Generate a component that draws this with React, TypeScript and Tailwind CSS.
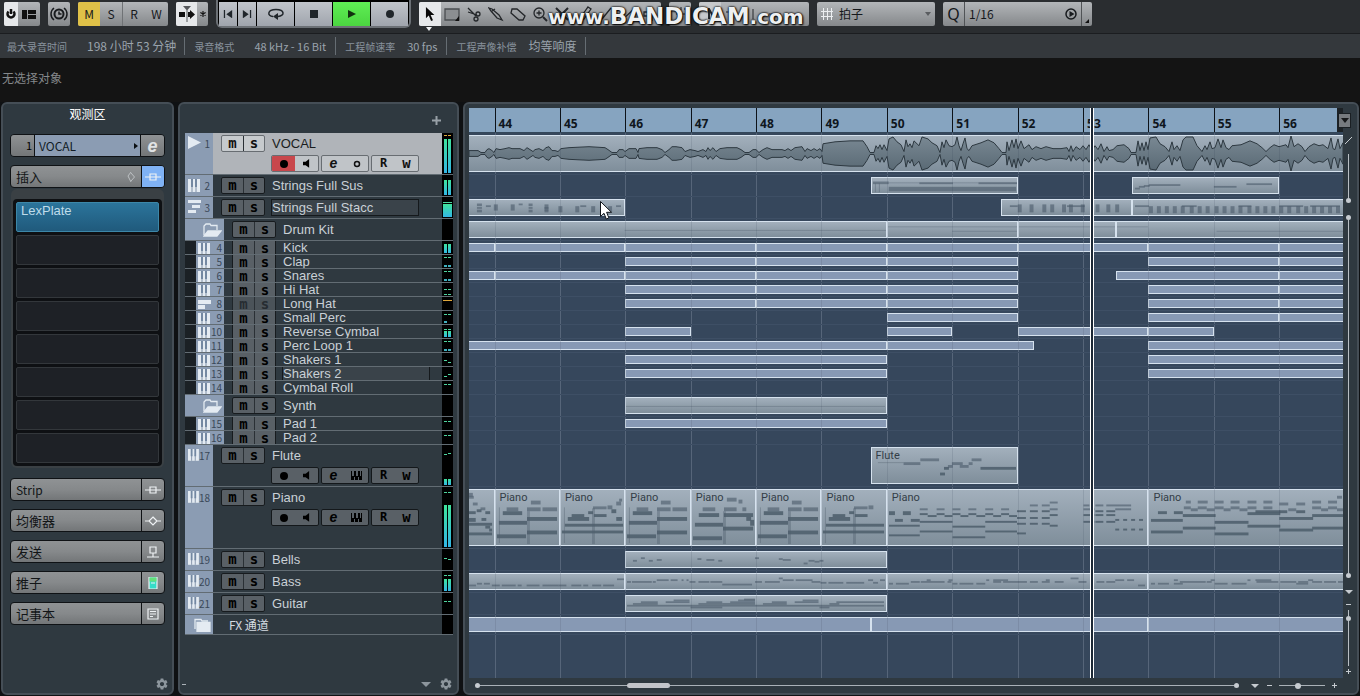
import type { ReactNode } from 'react'
import { MdSettings } from 'react-icons/md'

type Size = 'sm' | 'fx' | 'md' | 'lg' | 'xl'
type Note = [x: number, y: number, w: number, h: number]

interface Clip {
  from: number
  to: number
  label?: string
  notes?: Note[]
}

interface Track {
  name: string
  no?: number
  size: Size
  kind: 'audio' | 'midi' | 'rack' | 'folder' | 'fx'
  child?: boolean
  muted?: boolean
  selected?: boolean
  boxed?: boolean
  meter?: { l?: number; r?: number; peaks?: Note[]; hot?: boolean; wide?: boolean }
  clips?: Clip[]
}

const ROW_CLASS: Record<Size, string> = {
  sm: 'h-[14px]',
  fx: 'h-5',
  md: 'h-[22px]',
  lg: 'h-[42px]',
  xl: 'h-[62px]',
}

const ROW_PX: Record<Size, number> = { sm: 14, fx: 20, md: 22, lg: 42, xl: 62 }

// visible part of the timeline, in bars
const VIEW_START = 43.61
const VIEW_END = 56.975
const BAR_PX = 65.4
const BARS = [44, 45, 46, 47, 48, 49, 50, 51, 52, 53, 54, 55, 56]

const pct = (bar: number) => `${((bar - VIEW_START) / (VIEW_END - VIEW_START)) * 100}%`

const spans = (...edges: [number, number][]): Clip[] => edges.map(([from, to]) => ({ from, to }))

const row = (y: number, h: number, ...xs: [number, number][]): Note[] => xs.map(([x, w]) => [x, y, w, h])

const PIANO_A: Note[] = [
  [36, 11, 10, 4], [11, 18, 12, 4], [7, 22, 20, 4], [32, 18, 14, 4], [48, 18, 15, 4],
  [3, 32, 29, 4], [32, 28, 31, 4], [1, 46, 30, 4], [32, 42, 31, 4], [32, 22, 3, 34], [3, 18, 1, 37],
]

const PIANO_B: Note[] = [
  [11, 25, 13, 3], [7, 28, 22, 4], [4, 35, 60, 3], [1, 42, 63, 3], [32, 19, 3, 37], [3, 18, 1, 37],
  [33, 17, 14, 3], [34, 25, 13, 3], [28, 22, 5, 3], [48, 16, 5, 4], [52, 20, 5, 4], [57, 12, 5, 4],
  [60, 9, 3, 3], [57, 28, 6, 4],
]

const PIANO_C: Note[] = [
  [36, 8, 10, 4], [48, 10, 4, 4], [11, 18, 13, 4], [7, 24, 21, 4], [33, 18, 13, 4], [52, 18, 4, 4],
  [33, 24, 30, 4], [56, 28, 5, 4], [3, 34, 29, 4], [32, 38, 31, 4], [1, 48, 30, 4], [32, 22, 3, 34],
  [60, 31, 4, 6],
]

const PIANO_TAIL: Note[] = [
  [0, 3, 4, 4], [0, 6, 5, 3], [4, 13, 5, 3], [12, 18, 5, 3], [8, 20, 5, 3], [0, 22, 7, 3], [17, 22, 5, 3],
  [0, 29, 7, 4], [13, 29, 5, 3], [0, 34, 24, 3], [17, 37, 5, 3], [21, 40, 3, 3], [0, 44, 24, 3],
]

const PIANO_LONG: Note[] = [
  ...row(22, 4, [1, 6], [15, 8]),
  ...row(30, 3, [7, 8], [23, 9]),
  ...row(36, 2, [1, 31]),
  ...row(46, 2, [1, 31]),
  ...row(19, 2, [32, 8], [49, 8], [65, 8], [81, 8], [98, 8], [114, 8]),
  ...row(24, 2, [32, 8], [49, 8], [65, 8], [81, 8], [98, 8], [114, 8]),
  ...row(26, 2, [40, 9], [57, 8], [73, 8], [89, 9], [106, 8], [122, 8]),
  ...row(32, 2, [32, 33], [98, 32]),
  ...row(37, 2, [65, 33]),
  ...row(42, 2, [32, 33], [98, 32]),
  ...row(48, 2, [65, 33]),
  ...row(21, 2, [130, 9], [143, 8], [155, 8], [209, 8], [220, 9]),
  ...row(28, 2, [130, 9], [143, 8], [155, 8]),
  ...row(34, 2, [130, 9], [143, 8], [155, 8]),
  ...row(44, 2, [130, 9]),
  ...row(15, 2, [143, 8], [155, 8], [197, 6], [209, 8], [220, 25]),
  ...row(12, 2, [163, 8]),
  ...row(19, 2, [163, 8], [197, 11], [229, 16]),
  ...row(25, 2, [163, 8], [197, 11], [209, 8], [220, 9]),
  ...row(36, 2, [163, 8]),
  ...row(32, 2, [197, 11], [209, 8], [220, 9]),
  ...row(30, 2, [229, 4], [237, 4], [245, 4], [253, 4]),
  ...row(40, 2, [229, 4], [237, 4], [245, 4], [253, 4]),
]

const PIANO_END: Note[] = [
  ...row(11, 3, [37, 5], [49, 10], [66, 9], [82, 9], [99, 9], [115, 9], [164, 9], [180, 9]),
  ...row(13, 3, [131, 9], [148, 9]),
  ...row(6, 3, [189, 5]),
  ...row(17, 3, [35, 7], [49, 9], [66, 9], [82, 9], [99, 9], [115, 9], [164, 9], [180, 9]),
  ...row(19, 3, [42, 7], [58, 8], [75, 7], [91, 8], [140, 8], [173, 7], [189, 6]),
  ...row(21, 3, [107, 25], [131, 8], [148, 9]),
  ...row(22, 3, [9, 9], [25, 9]),
  ...row(30, 3, [2, 32]),
  ...row(25, 3, [34, 33], [164, 31]),
  ...row(32, 3, [66, 34]),
  ...row(23, 3, [99, 33]),
  ...row(28, 3, [131, 34]),
  ...row(42, 3, [2, 32]),
  ...row(38, 3, [34, 33], [164, 31]),
  ...row(44, 3, [66, 34]),
  ...row(36, 3, [99, 33]),
  ...row(40, 3, [131, 34]),
]

const BASS_HEAD: Note[] = [
  ...row(12, 2, [0, 7], [23, 8], [33, 14], [49, 4], [58, 13], [74, 16], [90, 8], [103, 10], [115, 5], [124, 9], [135, 11]),
  ...row(10, 2, [8, 5], [15, 6]),
  ...row(5, 2, [149, 7]),
]

const BASS_A: Note[] = [
  ...row(8, 2, [1, 4], [6, 20], [27, 3], [64, 6], [73, 11], [85, 12], [130, 7], [140, 15], [187, 9]),
  ...row(6, 2, [31, 12], [45, 7], [56, 2], [61, 2], [158, 11], [171, 17], [244, 5], [256, 5]),
  ...row(4, 2, [154, 4]),
  ...row(11, 2, [97, 30]),
  ...row(9, 2, [196, 6], [204, 15], [222, 18], [249, 5]),
]

const BASS_B: Note[] = [
  ...row(10, 2, [1, 4], [8, 13], [65, 5], [72, 14], [89, 9]),
  ...row(8, 2, [23, 9], [33, 24], [60, 4], [106, 8], [116, 8], [124, 16], [143, 8], [155, 8], [168, 9], [192, 8], [210, 8], [220, 9]),
  ...row(6, 2, [39, 4], [61, 4], [99, 3], [106, 15], [159, 4], [229, 9], [241, 7]),
  ...row(4, 2, [184, 8]),
  ...row(12, 2, [252, 7]),
]

const BASS_C: Note[] = [
  ...row(10, 2, [2, 4], [9, 11], [25, 9], [66, 13], [83, 15], [148, 12]),
  ...row(8, 2, [31, 26], [58, 5], [108, 22], [132, 16], [150, 10], [164, 10], [176, 12], [190, 5]),
  ...row(6, 2, [25, 4], [62, 4], [99, 3], [107, 16], [160, 5]),
]

const BELLS: Note[] = [
  ...row(9, 2, [7, 4], [23, 4], [93, 4], [184, 6], [195, 4]),
  ...row(6, 2, [15, 4], [130, 4]),
  ...row(8, 2, [31, 5], [81, 8], [158, 8]),
  ...row(7, 2, [72, 4], [154, 4]),
  ...row(10, 2, [190, 5]),
  ...row(12, 2, [179, 4]),
]

const GUITAR: Note[] = [
  ...row(10, 2, [1, 259]),
  ...row(12, 2, [65, 32], [195, 10]),
  ...row(8, 2, [7, 25], [73, 24], [97, 33], [138, 24], [205, 10]),
  ...row(6, 2, [15, 17], [40, 24], [81, 16], [105, 25], [147, 15], [170, 24], [212, 48]),
  ...row(4, 2, [48, 16], [113, 17], [178, 16]),
  ...row(3, 2, [119, 11]),
]

const STACC_A: Note[] = [
  ...row(4, 3, [8, 5], [60, 4]),
  ...row(8, 2, [8, 5], [60, 4], [76, 4]),
  ...row(11, 3, [8, 5], [60, 4], [76, 4]),
  ...row(6, 2, [17, 5], [112, 6], [148, 5]),
  ...row(4, 2, [50, 4]),
  ...row(5, 7, [25, 4], [42, 4], [76, 4]),
  ...row(7, 7, [90, 4], [107, 4], [123, 4], [140, 4]),
]

const STACC_B: Note[] = [
  ...row(6, 2, [8, 8], [66, 18]),
  ...row(5, 9, [16, 4], [28, 4], [41, 4], [49, 4], [61, 4], [68, 4], [80, 4], [95, 4], [106, 4], [115, 4]),
]

const STACC_C: Note[] = [
  ...row(6, 2, [2, 14], [49, 15], [106, 13], [147, 24], [178, 30]),
  ...row(7, 8, [16, 4], [24, 4], [32, 4], [40, 4], [48, 4], [57, 4], [65, 4], [73, 4], [82, 4], [90, 4], [98, 4], [106, 4], [115, 4], [123, 4], [131, 4], [139, 4], [147, 4], [155, 4], [164, 4], [172, 4], [180, 4], [188, 4], [196, 4], [204, 4]),
]

const SUS_A: Note[] = [[1, 4, 16, 3], [17, 10, 129, 5], [17, 5, 130, 1], [3, 6, 1, 10], [7, 6, 1, 10], [48, 5, 34, 2], [108, 5, 40, 2]]
const SUS_B: Note[] = [[2, 11, 5, 2], [6, 9, 6, 2], [11, 8, 6, 2], [16, 7, 32, 2], [82, 9, 23, 2], [115, 6, 26, 2]]

const FLUTE: Note[] = [
  [6, 15, 26, 1], [32, 15, 17, 3], [49, 11, 19, 3], [69, 26, 5, 3], [73, 20, 5, 3], [77, 18, 5, 3],
  [81, 15, 11, 3], [89, 18, 9, 3], [98, 15, 4, 3], [101, 11, 10, 3], [110, 20, 36, 3],
]

const PAIR_LOW: Note[] = [[2, 2, 3, 1], [6, 2, 3, 1], [2, 10, 3, 2], [6, 10, 3, 2]]
const HAT_CLIPS = spans([46, 48], [48, 50], [50, 52], [54, 56], [56, VIEW_END])
const SHAKER_CLIPS = spans([46, 50], [54, VIEW_END])

const TRACKS: Track[] = [
  { name: 'VOCAL', no: 1, size: 'lg', kind: 'audio', selected: true, meter: { l: 34, r: 34, peaks: [[2, 2, 3, 1], [6, 2, 3, 1]], hot: true }, clips: spans([VIEW_START, VIEW_END]) },
  { name: 'Strings Full Sus', no: 2, size: 'md', kind: 'midi', meter: { l: 15, r: 15 }, clips: [{ from: 49.75, to: 52, notes: SUS_A }, { from: 53.75, to: 56, notes: SUS_B }] },
  { name: 'Strings Full Stacc', no: 3, size: 'md', kind: 'rack', boxed: true, meter: { l: 13, r: 13, wide: true, peaks: [[1, 5, 9, 1]] }, clips: [{ from: VIEW_START, to: 46, notes: STACC_A }, { from: 51.75, to: 53.75, notes: STACC_B }, { from: 53.75, to: VIEW_END, notes: STACC_C }] },
  {
    name: 'Drum Kit', size: 'md', kind: 'folder',
    clips: [
      { from: VIEW_START, to: 50, notes: [[156, 9, 262, 1]] },
      { from: 50, to: 52, notes: [[0, 5, 131, 1], [65, 10, 66, 1]] },
      { from: 52, to: 53.5, notes: [[0, 5, 98, 1]] },
      { from: 53.5, to: VIEW_END, notes: [[0, 5, 31, 1], [100, 10, 128, 1]] },
    ],
  },
  { name: 'Kick', no: 4, size: 'sm', kind: 'midi', child: true, meter: { l: 9, r: 9 }, clips: spans([VIEW_START, 44], [44, 46], [46, 48], [48, 50], [50, 52], [52, 54], [54, 56], [56, VIEW_END]) },
  { name: 'Clap', no: 5, size: 'sm', kind: 'midi', child: true, meter: { peaks: PAIR_LOW }, clips: HAT_CLIPS },
  { name: 'Snares', no: 6, size: 'sm', kind: 'midi', child: true, meter: { peaks: PAIR_LOW }, clips: spans([VIEW_START, 44], [44, 46], [46, 48], [48, 50], [50, 52], [53.5, 56], [56, VIEW_END]) },
  { name: 'Hi Hat', no: 7, size: 'sm', kind: 'midi', child: true, meter: { peaks: [[2, 6, 3, 1], [6, 6, 3, 1], [2, 11, 3, 1], [6, 11, 3, 1]] }, clips: HAT_CLIPS },
  { name: 'Long Hat', no: 8, size: 'sm', kind: 'rack', child: true, muted: true, meter: { peaks: [[1, 3, 9, 1]], hot: true }, clips: HAT_CLIPS },
  { name: 'Small Perc', no: 9, size: 'sm', kind: 'midi', child: true, meter: { peaks: [[2, 3, 3, 1], [6, 3, 3, 1], [2, 10, 3, 2]] }, clips: spans([50, 52], [54, 56], [56, VIEW_END]) },
  { name: 'Reverse Cymbal', no: 10, size: 'sm', kind: 'midi', child: true, meter: { l: 6, r: 6, peaks: [[2, 4, 3, 1], [6, 4, 3, 1]] }, clips: spans([46, 47], [50, 51], [52, 54], [54, 55]) },
  { name: 'Perc Loop 1', no: 11, size: 'sm', kind: 'midi', child: true, meter: { peaks: PAIR_LOW }, clips: spans([VIEW_START, 50], [50, 52.25], [54, VIEW_END]) },
  { name: 'Shakers 1', no: 12, size: 'sm', kind: 'midi', child: true, meter: { peaks: [[2, 7, 3, 1], [6, 9, 3, 1]] }, clips: SHAKER_CLIPS },
  { name: 'Shakers 2', no: 13, size: 'sm', kind: 'midi', child: true, boxed: true, meter: { peaks: [[2, 9, 3, 1], [6, 7, 3, 1]] }, clips: SHAKER_CLIPS },
  { name: 'Cymbal Roll', no: 14, size: 'sm', kind: 'midi', child: true, meter: { peaks: [[2, 3, 3, 1], [6, 3, 3, 1]] } },
  { name: 'Synth', size: 'md', kind: 'folder', clips: [{ from: 46, to: 50, notes: [[0, 9, 261, 1]] }] },
  { name: 'Pad 1', no: 15, size: 'sm', kind: 'midi', child: true, meter: { peaks: [[2, 4, 3, 1], [6, 4, 3, 1]] }, clips: spans([46, 50]) },
  { name: 'Pad 2', no: 16, size: 'sm', kind: 'midi', child: true, meter: { peaks: [[2, 4, 3, 1], [6, 4, 3, 1]] } },
  { name: 'Flute', no: 17, size: 'lg', kind: 'midi', meter: { l: 6, r: 6, peaks: [[2, 9, 3, 1], [6, 8, 3, 1]] }, clips: [{ from: 49.75, to: 52, label: 'Flute', notes: FLUTE }] },
  {
    name: 'Piano', no: 18, size: 'xl', kind: 'midi', meter: { l: 42, r: 42, peaks: [[2, 5, 3, 1], [6, 5, 3, 1]] },
    clips: [
      { from: VIEW_START, to: 44, notes: PIANO_TAIL },
      { from: 44, to: 45, label: 'Piano', notes: PIANO_A },
      { from: 45, to: 46, label: 'Piano', notes: PIANO_B },
      { from: 46, to: 47, label: 'Piano', notes: PIANO_A },
      { from: 47, to: 48, label: 'Piano', notes: PIANO_C },
      { from: 48, to: 49, label: 'Piano', notes: PIANO_A },
      { from: 49, to: 50, label: 'Piano', notes: PIANO_B.slice(0, 10) },
      { from: 50, to: 54, label: 'Piano', notes: PIANO_LONG },
      { from: 54, to: VIEW_END, label: 'Piano', notes: PIANO_END },
    ],
  },
  { name: 'Bells', no: 19, size: 'md', kind: 'midi', meter: { peaks: [[2, 9, 3, 1], [6, 10, 3, 1]] }, clips: [{ from: 46, to: 50, notes: BELLS }] },
  { name: 'Bass', no: 20, size: 'md', kind: 'midi', meter: { l: 12, r: 12, peaks: [[2, 4, 3, 1], [6, 4, 3, 1]] }, clips: [{ from: VIEW_START, to: 46, notes: BASS_HEAD }, { from: 46, to: 50, notes: BASS_A }, { from: 50, to: 54, notes: BASS_B }, { from: 54, to: VIEW_END, notes: BASS_C }] },
  { name: 'Guitar', no: 21, size: 'md', kind: 'midi', meter: { peaks: [[2, 8, 3, 1], [6, 8, 3, 1]] }, clips: [{ from: 46, to: 50, notes: GUITAR }] },
  { name: 'FX 通道', size: 'fx', kind: 'fx', clips: spans([VIEW_START, 49.75], [49.75, 54], [54, VIEW_END]) },
]

// [x, amplitude] pairs of the vocal take
const WAVE: [number, number][] = [
  [0, 3], [9, 3], [12, 1], [16, 1], [18, 4], [20, 5], [23, 3], [25, 1], [27, 5], [31, 4], [36, 5], [40, 6], [43, 5], [51, 5],
  [55, 3], [58, 6], [61, 4], [64, 2], [66, 4], [70, 5], [74, 3], [77, 6], [80, 7], [83, 3], [86, 3], [89, 2], [92, 5], [100, 6],
  [120, 7], [136, 6], [139, 4], [143, 1], [148, 1], [150, 4], [154, 4], [156, 2], [160, 5], [167, 5], [169, 1], [170, 5],
  [178, 6], [188, 6], [193, 4], [196, 1], [200, 4], [203, 7], [207, 7], [213, 6], [216, 2], [221, 4], [226, 3], [229, 2],
  [234, 4], [237, 2], [239, 6], [241, 3], [244, 6], [247, 2], [251, 5], [258, 6], [268, 6], [272, 4], [276, 1], [280, 1],
  [284, 4], [287, 4], [290, 1], [294, 4], [298, 6], [303, 4], [313, 4], [316, 3], [319, 5], [322, 3], [326, 6], [333, 7],
  [336, 2], [338, 5], [342, 3], [345, 5], [348, 3], [351, 5], [353, 2], [354, 10], [366, 12], [381, 13], [394, 13], [398, 7],
  [401, 1], [405, 1], [407, 8], [409, 5], [411, 9], [413, 4], [415, 9], [418, 3], [420, 15], [424, 17], [428, 12], [432, 9],
  [435, 2], [437, 14], [439, 7], [441, 10], [443, 6], [445, 13], [448, 10], [450, 8], [453, 17], [459, 15], [463, 11],
  [468, 8], [471, 1], [473, 12], [475, 6], [477, 14], [480, 8], [483, 7], [486, 9], [488, 17], [490, 8], [492, 3], [494, 10],
  [496, 16], [498, 5], [500, 3], [503, 8], [512, 11], [519, 14], [525, 11], [530, 5], [533, 1], [537, 1], [538, 12], [540, 3],
  [543, 14], [545, 6], [547, 15], [549, 5], [552, 13], [555, 5], [560, 9], [563, 4], [567, 7], [572, 5], [577, 7], [584, 5],
  [592, 5], [598, 6], [600, 2], [602, 8], [604, 2], [607, 7], [611, 4], [614, 8], [617, 4], [620, 9], [623, 3], [626, 8],
  [629, 4], [632, 10], [635, 2], [638, 7], [640, 3], [644, 4], [648, 8], [655, 9], [660, 5], [662, 1], [667, 1], [669, 13],
  [671, 3], [673, 11], [675, 3], [677, 12], [679, 4], [681, 16], [687, 17], [691, 10], [696, 7], [700, 2], [703, 12],
  [705, 4], [708, 8], [711, 3], [714, 14], [717, 17], [724, 17], [728, 8], [733, 2], [736, 8], [738, 4], [741, 12], [743, 5],
  [746, 6], [749, 15], [752, 6], [754, 14], [757, 6], [760, 4], [763, 8], [772, 9], [781, 13], [788, 10], [793, 6], [797, 2],
  [801, 6], [805, 9], [810, 7], [817, 9], [819, 6], [822, 18], [825, 7], [829, 10], [833, 7], [836, 2], [840, 7], [845, 10],
  [850, 8], [854, 9], [859, 5], [862, 16], [864, 5], [866, 4], [869, 15], [871, 5], [874, 11],
]

const MID = 18
const WAVE_PATH =
  'M' +
  WAVE.map(([x, a]) => `${x} ${MID - a}`).join('L') +
  'L' +
  [...WAVE].reverse().map(([x, a]) => `${x} ${MID + a}`).join('L') +
  'Z'

const METAL = 'bg-linear-to-b from-[#b3b6b9] via-[#9c9fa2] to-[#85888b] text-[#15181b]'
const SEG = 'flex shrink-0 items-center justify-center'

/* ---------- toolbar ---------- */

function ToolButton({ label, className = 'w-[22px]', children }: { label: string; className?: string; children?: ReactNode }) {
  return (
    <button type="button" aria-label={label} className={`${SEG} h-6 ${className}`}>
      {children}
    </button>
  )
}

function Group({ children }: { children: ReactNode }) {
  return <div className={`mt-0.5 flex shrink-0 overflow-hidden rounded-xs ${METAL}`}>{children}</div>
}

function Transport() {
  const cell = 'bg-linear-to-b from-[#c0c4ca] to-[#a0a5ad] text-[#20262b]'
  return (
    <div className="flex h-7 shrink-0 rounded-md rounded-t-none border-2 border-t-0 border-[#6c7176] bg-black px-px pt-0.5">
      <ToolButton label="Previous marker" className={`w-[18px] ${cell}`}>
        <svg viewBox="0 0 12 10" className="w-[10px]" fill="currentColor"><path d="M1 0h1.500v10H1zM11 0v10L4 5z" /></svg>
      </ToolButton>
      <ToolButton label="Next marker" className={`w-[19px] border-l border-black ${cell}`}>
        <svg viewBox="0 0 12 10" className="w-[10px]" fill="currentColor"><path d="M9.500 0H11v10H9.500zM1 0v10l7-5z" /></svg>
      </ToolButton>
      <ToolButton label="Cycle" className={`w-[38px] border-l border-black ${cell}`}>
        <svg viewBox="0 0 18 12" className="w-[18px]" fill="none" stroke="currentColor" strokeWidth="1.500">
          <path d="M6 8.500C0 8 0 1.500 9 1.500S18 8 11 8.500" />
          <path d="M11 5v7L6 8.500z" fill="currentColor" stroke="none" />
        </svg>
      </ToolButton>
      <ToolButton label="Stop" className={`w-[38px] border-l border-black ${cell}`}>
        <svg viewBox="0 0 8 8" className="w-2"><path d="M0 0h8v8H0z" fill="currentColor" /></svg>
      </ToolButton>
      <ToolButton label="Play" className="w-[38px] border-l border-black bg-linear-to-b from-[#5fee55] to-[#4bd540] text-[#12300f]">
        <svg viewBox="0 0 8 8" className="w-2"><path d="M0 0l8 4-8 4z" fill="currentColor" /></svg>
      </ToolButton>
      <ToolButton label="Record" className={`w-[38px] border-l border-black ${cell}`}>
        <svg viewBox="0 0 8 8" className="w-2"><circle cx="4" cy="4" r="4" fill="currentColor" /></svg>
      </ToolButton>
    </div>
  )
}

const TOOLS: [string, ReactNode][] = [
  ['Range', <><path d="M1 3h14v11H1z" fill="#8b8e91" stroke="#4a4d50" /><path d="M15 10v5h-4z" fill="#111" stroke="none" /></>],
  ['Split', <><path d="M2 2l8 8M2 6l9 3" /><circle cx="12" cy="8" r="2" /><circle cx="10" cy="13" r="2" /></>],
  ['Glue', <path d="M1 2l3 1 7 6 3 5-5-2-6-7zM4 5l3-2" />],
  ['Erase', <path d="M2 3h5l8 7-2 4H9L1 7z" />],
  ['Zoom', <><circle cx="7" cy="7" r="5" /><path d="M4.500 7h5M7 4.500v5" /><path d="M11 11l4 4" strokeWidth="2" /></>],
  ['Mute', <path d="M2 2l12 12M14 2L2 14" strokeWidth="2" />],
  ['Time warp', <path d="M12 1l3 2-7 10-4 2 1-4z" />],
  ['Draw', <path d="M13 2L4 13" />],
  ['Line', <path d="M2 14L14 3" />],
  ['Play', <path d="M2 6h4l4-4v12l-4-4H2z" />],
]

function Toolbar() {
  return (
    <header className="relative flex h-[34px] items-start gap-2 overflow-hidden border-b border-[#1b1d20] bg-[#2a2d30] pl-1">
      <Group>
        <ToolButton label="Activate project" className="w-[14px] bg-[#e6e8ea]">
          <svg viewBox="0 0 10 10" className="w-[10px]" fill="none" stroke="#111" strokeWidth="2.500">
            <path d="M2.500 2.500a3.500 3.500 0 1 0 5 0M5 0v5" />
          </svg>
        </ToolButton>
        <ToolButton label="Window layout">
          <svg viewBox="0 0 14 9" className="w-[14px]" fill="#111"><path d="M0 0h5v9H0zM6 0h8v4H6zM6 5h8v4H6z" /></svg>
        </ToolButton>
      </Group>
      <Group>
        <ToolButton label="Constrain delay compensation">
          <svg viewBox="0 0 18 16" className="w-[18px]" fill="none" stroke="#181b1e" strokeWidth="1.500">
            <circle cx="9" cy="8" r="4.500" strokeWidth="2" />
            <path d="M9 5.500V8h2.500M4 2C0 5 0 11 4 14M14 2c4 3 4 9 0 12" />
          </svg>
        </ToolButton>
      </Group>
      <div className={`mt-0.5 flex shrink-0 overflow-hidden rounded-xs text-xs ${METAL}`}>
        <button type="button" className="h-6 w-[22px] bg-[#dfc148]">M</button>
        <button type="button" className="h-6 w-[22px]">S</button>
        <button type="button" className="h-6 w-[23px] border-l border-[#6f7275]">R</button>
        <button type="button" className="h-6 w-[23px]">W</button>
      </div>
      <Group>
        <ToolButton label="Auto-scroll" className="w-[21px] bg-[#e6e8ea]">
          <svg viewBox="0 0 16 16" className="w-4" fill="#111">
            <path d="M0 6h6v5H0zM9 6h2V4l5 4.500-5 4.500v-2H9z" />
            <path d="M4 0h8L8.500 4V16h-1V4z" fill="#55585b" />
          </svg>
        </ToolButton>
        <ToolButton label="Suspend auto-scroll" className="w-[11px]">
          <svg viewBox="0 0 8 8" className="w-1.5" stroke="#111" strokeWidth="1.500"><path d="M4 0v8M.5 2l7 4M7.500 2l-7 4" /></svg>
        </ToolButton>
      </Group>
      <Transport />
      <div className="shrink-0">
        <Group>
          <ToolButton label="Object selection" className="w-[22px] bg-[#e6e8ea]">
            <svg viewBox="0 0 10 16" className="h-[15px]" fill="#080808"><path d="M1 0v12l3-3 2.500 6 2-1-2.500-5.500h4z" /></svg>
          </ToolButton>
          {TOOLS.map(([label, icon]) => (
            <ToolButton key={label} label={label}>
              <svg viewBox="0 0 16 16" className="w-4" fill="none" stroke="#24272a" strokeWidth="1.300">{icon}</svg>
            </ToolButton>
          ))}
        </Group>
        <svg viewBox="0 0 6 4" className="mt-px ml-[7px] w-1.5" fill="#f0f2f4"><path d="M0 0h6L3 4z" /></svg>
      </div>
      <Group>
        <ToolButton label="Color tool"><svg viewBox="0 0 16 16" className="w-4" stroke="#24272a"><path d="M2 4h5M9 1v3M12 3h2M4 8h9" /></svg></ToolButton>
      </Group>
      <Group>
        <ToolButton label="Snap" className="w-[22px] bg-[#c6c9cc]">
          <svg viewBox="0 0 16 16" className="w-4" fill="none" stroke="#24272a" strokeWidth="2"><path d="M2 3h5l5 9M7 3v10" /></svg>
        </ToolButton>
        <ToolButton label="Snap type" className="w-[88px]">
          <svg viewBox="0 0 80 16" className="w-20" stroke="#24272a"><path d="M5 2v12M1 6h10M22 3v10M28 3v10M44 8h12" /></svg>
        </ToolButton>
      </Group>
      <div className={`mt-0.5 flex h-6 w-[118px] shrink-0 items-center rounded-xs pl-1 ${METAL}`}>
        <svg viewBox="0 0 12 12" className="w-3 shrink-0" stroke="#eceef0"><path d="M2.500 0v12M6.500 0v12M10.500 0v12M0 3.500h12M0 8.500h12" /></svg>
        <select aria-label="网格类型" className="h-6 flex-1 appearance-none pl-1.5 text-xs">
          <option>拍子</option>
        </select>
        <svg viewBox="0 0 6 4" className="mr-1 w-1.5 shrink-0" fill="#5a5d60"><path d="M0 0h6L3 4z" /></svg>
      </div>
      <div className={`mt-0.5 flex h-6 w-[149px] shrink-0 items-center rounded-xs ${METAL}`}>
        <span className={`${SEG} h-6 w-[22px] border-r border-[#505356] font-['Noto_Sans'] text-base`}>Q</span>
        <select aria-label="量化预设" className="h-6 min-w-0 flex-1 appearance-none pl-1 text-xs">
          <option>1/16</option>
        </select>
        <button type="button" aria-label="应用量化" className="mr-1">
          <svg viewBox="0 0 12 12" className="w-3" fill="none" stroke="#181b1e" strokeWidth="1.500">
            <circle cx="6" cy="6" r="5" />
            <path d="M4.500 3l5 3-5 3z" fill="#181b1e" stroke="none" />
          </svg>
        </button>
        <button type="button" aria-label="量化面板" className="flex h-6 w-[11px] items-end justify-end border-l border-[#505356] p-[3px]">
          <svg viewBox="0 0 4 4" className="w-1"><path d="M4 0v4H0z" fill="#111" /></svg>
        </button>
      </div>
      <div className="pointer-events-none absolute top-0.5 left-[548px] flex items-baseline font-['DejaVu_Sans'] text-xl leading-7 font-bold text-[#eef0f1] [text-shadow:0_0_2px_#000,0_0_2px_#000,1px_1px_2px_#000]">
        <span>www.</span>
        <span className="text-[23px]">BANDICAM</span>
        <span>.com</span>
      </div>
    </header>
  )
}

const INFO: [string, string][] = [
  ['最大录音时间', '198 小时 53 分钟'],
  ['录音格式', '48 kHz - 16 Bit'],
  ['工程帧速率', '30 fps'],
  ['工程声像补偿', '均等响度'],
]

function InfoLine() {
  return (
    <dl className="flex h-6 items-center bg-[#34383c] text-[#9aa3ac]">
      {INFO.map(([label, value], i) => (
        <div key={label} className="flex h-[18px] items-center border-r border-[#666d73] px-[9px] first:pr-2 first:pl-[7px]">
          <dt className="text-[10px] text-[#88929c]">{label}</dt>
          <dd className={i === 0 ? 'ml-5 text-xs' : i === 1 ? 'ml-5 text-[11px]' : i === 2 ? 'ml-3 text-[11px]' : 'ml-3 text-xs'}>{value}</dd>
        </div>
      ))}
    </dl>
  )
}

/* ---------- inspector ---------- */

const SECTION_BTN = 'flex h-[23px] overflow-hidden rounded border border-[#0f1215] bg-linear-to-b from-[#8f9294] via-[#86898b] to-[#737678] text-[#121517]'

function BoxIcon() {
  return <path d="M0 6h5M11 6h5M5 3h6v6H5zM5 6h6" />
}

const SECTIONS: [string, ReactNode][] = [
  ['Strip', <BoxIcon />],
  ['均衡器', <path d="M0 6h4M12 6h4M8 2l4 4-4 4-4-4z" />],
  ['发送', <path d="M5 1h6v6H5zM8 7v4M2 11h12" />],
  ['推子', <><path d="M4 0h8v12H4z" fill="#35dcc8" /><path d="M4.500 .5h7v4h-7z" fill="#63e07a" stroke="none" /><path d="M6 6h4" /></>],
  ['记事本', <path d="M3 1h10v10H3zM5 3.500h6M5 6h6M5 8.500h3" />],
]

function SectionIcon({ children }: { children: ReactNode }) {
  return (
    <svg viewBox="0 0 16 12" className="w-4" fill="none" stroke="#eef1f3" strokeWidth="1.200">
      {children}
    </svg>
  )
}

function Inspector() {
  return (
    <aside className="flex w-[173px] shrink-0 flex-col rounded-md border-2 border-[#454e56] bg-[#2f3940] px-[7px] pb-0.5">
      <h2 className="mt-px mb-[11px] text-center text-xs leading-[18px] text-white">观测区</h2>
      <div className="mb-2 flex h-[23px] overflow-hidden rounded border border-[#0f1215] text-xs">
        <span className="w-[23px] bg-linear-to-b from-[#8f9294] to-[#737678] pr-0.5 text-right text-[11px] leading-[21px] text-black">1</span>
        <button type="button" className="flex flex-1 items-center justify-between border-x border-[#0f1215] bg-[#8b9cb3] pr-0.5 pl-1 text-[#121c26]">
          VOCAL
          <svg viewBox="0 0 4 6" className="w-1"><path d="M0 0l4 3-4 3z" fill="#0b0f13" /></svg>
        </button>
        <button type="button" aria-label="Edit channel" className="w-[23px] bg-linear-to-b from-[#8f9294] to-[#737678] font-['Liberation_Sans'] text-lg leading-[20px] font-bold text-[#e0e3e5] italic">e</button>
      </div>
      <div className={SECTION_BTN}>
        <button type="button" className="flex flex-1 items-center justify-between pr-1.5 pl-[5px] text-[13px]">
          插入
          <svg viewBox="0 0 8 10" className="w-2" fill="none" stroke="#bcc0c3"><path d="M4 0L1 4l3 6M4 1l3.500 4L4 9" /></svg>
        </button>
        <button type="button" aria-label="旁通" className={`${SEG} w-[23px] border-l border-[#0f1215] bg-[#7fb2f5]`}>
          <SectionIcon><BoxIcon /></SectionIcon>
        </button>
      </div>
      <div className="mx-px mt-px mb-[10px] rounded-md bg-[#3a4044] px-0.5 pt-[10px] pb-0.5">
        <ul className="flex flex-col gap-[3px] rounded bg-[#0e1013] p-[3px]">
          <li className="h-[30px] rounded-xs border border-[#3d87a8] bg-linear-to-b from-[#2b749b] to-[#205a7c] pl-1 font-['Liberation_Sans'] text-[13px] leading-4 text-[#bfdcea]">LexPlate</li>
          {[2, 3, 4, 5, 6, 7, 8].map((slot) => (
            <li key={slot} className="h-[30px] rounded-xs border border-[#33373b] bg-[#1e2126]" />
          ))}
        </ul>
      </div>
      <div className="flex flex-col gap-2">
        {SECTIONS.map(([label, icon]) => (
          <div key={label} className={SECTION_BTN}>
            <button type="button" className={`flex-1 pl-[5px] text-left leading-[21px] ${label === 'Strip' ? 'text-xs' : 'text-[13px]'}`}>{label}</button>
            <button type="button" aria-label={`${label} 旁通`} className={`${SEG} w-[23px] border-l border-[#0f1215]`}>
              <SectionIcon>{icon}</SectionIcon>
            </button>
          </div>
        ))}
      </div>
      <button type="button" aria-label="设置" className="mt-auto -mr-1 ml-auto text-[#8d969d]">
        <MdSettings size={14} />
      </button>
    </aside>
  )
}

/* ---------- track list ---------- */

function TrackIcon({ kind, small }: { kind: Track['kind']; small?: boolean }) {
  if (kind === 'audio') {
    return <svg viewBox="0 0 13 13" className="w-[13px]"><path d="M0 0l13 6.500L0 13z" fill="#e4ebf2" /></svg>
  }
  if (kind === 'rack') {
    return (
      <svg viewBox="0 0 13 13" className={small ? 'mt-0.5 h-[13px] w-[13px]' : 'w-[13px]'} fill="#e4ebf2">
        <path d={small ? 'M0 0h13v4H0zM0 5h7v4H0z' : 'M0 0h13v3H0zM4 5h8v3H4zM0 10h8v3H0z'} />
      </svg>
    )
  }
  if (kind === 'folder' || kind === 'fx') {
    return (
      <svg viewBox="0 0 19 14" className="w-[19px]" fill="none" stroke="#e4ebf2" strokeWidth="1.300">
        {kind === 'folder' ? (
          <><path d="M1 12V3l2-2h4l1 1.500h6V7" /><path d="M1 13l4-5h13l-4 5z" fill="#e4ebf2" /></>
        ) : (
          <><path d="M2 11V1.500h6l1 1.500h6" /><path d="M4 4.500h13v9H4z" fill="#e4ebf2" /></>
        )}
      </svg>
    )
  }
  return (
    <svg viewBox="0 0 12 13" className="mt-px w-3">
      <path d="M0 0h12v13H0z" fill="#e4ebf2" />
      <path d="M4 7v6M8 7v6" stroke="#7f90a6" />
      <path d="M3 0h2v8H3zM7 0h2v8H7z" fill="#7388a2" />
    </svg>
  )
}

function Meter({ track }: { track: Track }) {
  const h = ROW_PX[track.size] - 1
  const m = track.meter
  return (
    <svg viewBox={`0 0 11 ${h}`} className="ml-auto w-[11px] shrink-0 bg-black" preserveAspectRatio="none">
      {m?.l && <rect x={m.wide ? 1 : 2} y={h - m.l - 1} width={m.wide ? 9 : 3} height={m.l} fill="url(#level)" />}
      {m?.r && !m.wide && <rect x="6" y={h - m.r - 1} width="3" height={m.r} fill="url(#level)" />}
      {m?.peaks?.map(([x, y, w, ph], i) => (
        <rect key={i} x={x} y={y} width={w} height={ph} fill={m.hot ? '#e0a83c' : ph > 1 ? '#3fb0c0' : '#4fd6a0'} />
      ))}
    </svg>
  )
}

function ChannelControls({ track }: { track: Track }) {
  const pair = `flex h-[17px] w-12 overflow-hidden rounded-xs border font-['DejaVu_Sans_Mono'] text-xs leading-[15px] font-bold ${
    track.selected ? 'border-[#686d72] bg-[#c0c4c8] text-[#111]' : 'border-[#14181b] bg-[#596066] text-black'
  }`
  return (
    <div className="mt-[3px] flex gap-0.5">
      <div className={pair}>
        <button type="button" aria-label="Record enable" className={`${SEG} w-[23px] ${track.selected ? 'bg-[#c8474c]' : ''}`}>
          <svg viewBox="0 0 8 8" className="w-2"><circle cx="4" cy="4" r="4" /></svg>
        </button>
        <button type="button" aria-label="Monitor" className={`${SEG} flex-1`}>
          <svg viewBox="0 0 8 10" className="w-[7px]"><path d="M0 3h3l4-3v10L3 7H0z" /></svg>
        </button>
      </div>
      <div className={pair}>
        <button type="button" aria-label="Edit channel" className="w-[23px] font-['Liberation_Sans'] text-sm leading-[13px] italic">e</button>
        <button type="button" aria-label="Instrument" className={`${SEG} flex-1`}>
          {track.kind === 'audio' ? (
            <svg viewBox="0 0 8 8" className="w-2" fill="none" stroke="#111" strokeWidth="1.500"><circle cx="4" cy="4" r="2.500" /></svg>
          ) : (
            <svg viewBox="0 0 11 9" className="w-[11px]"><path d="M0 0h1v5h2V0h2v5h2V0h2v5h1V0h1v9H8V6H7v3H4V6H3v3H0z" /></svg>
          )}
        </button>
      </div>
      <div className={pair}>
        <button type="button" className="w-[23px]">R</button>
        <button type="button" className="flex-1 text-sm leading-[13px]">w</button>
      </div>
    </div>
  )
}

function TrackRow({ track }: { track: Track }) {
  const small = track.size === 'sm'
  const isFx = track.kind === 'fx'
  const headWidth = track.kind === 'folder' ? 'w-[39px] justify-end pr-0.5 pt-1' : isFx ? 'w-7 justify-end pr-px pt-[3px]' : `w-7 justify-between ${small ? 'px-0.5 pt-px' : 'px-[3px] pt-[3px]'}`
  const nameBox = track.boxed ? `border-[#15191c] bg-[#3a434a] ${small ? 'border-x' : 'border'}` : 'border-transparent border-x'
  return (
    <li className={`flex overflow-hidden border-b border-[#626c73] ${ROW_CLASS[track.size]} ${track.selected ? 'bg-[#b0b4b9]' : ''}`}>
      {track.child && <span className="w-[11px] shrink-0 bg-[#1b2125]" />}
      <div className={`flex shrink-0 items-start bg-[#8b9cb3] ${headWidth}`}>
        <TrackIcon kind={track.kind} small={small} />
        {track.no && <span className={`text-[10px] text-[#3a4858] ${small ? 'leading-3' : 'leading-4'}`}>{track.no}</span>}
      </div>
      {!isFx && (
        <div
          className={`ml-2 flex w-11 shrink-0 border font-['DejaVu_Sans_Mono'] text-sm font-bold ${
            small ? 'h-[14px] border-y-0 leading-[11px]' : 'mt-0.5 h-[17px] rounded-xs leading-[13px]'
          } ${track.selected ? 'border-[#686d72] bg-[#c6cacd] text-[#111]' : track.muted ? 'border-[#1f2529] bg-[#4b5359] text-[#262c31]' : 'border-[#171b1e] bg-[#596066] text-black'}`}
        >
          <button type="button" aria-label={`Mute ${track.name}`} className="w-[22px] border-r border-[#2a3035]">m</button>
          <button type="button" aria-label={`Solo ${track.name}`} className="flex-1">s</button>
        </div>
      )}
      <div className={isFx ? 'ml-4' : `ml-1.5 ${small ? '' : 'pt-0.5'}`}>
        {isFx ? (
          <span className="block text-xs leading-[19px] text-[#d5dce2]">{track.name}</span>
        ) : (
          <span
            className={`block w-[148px] font-['Liberation_Sans'] text-[13px] whitespace-nowrap ${small ? 'leading-[13px]' : track.boxed ? 'leading-[15px]' : 'leading-[17px]'} ${nameBox} ${
              track.selected ? 'text-[#1a1d20]' : 'text-[#c9d0d6]'
            }`}
          >
            {track.name}
          </span>
        )}
        {(track.size === 'lg' || track.size === 'xl') && <ChannelControls track={track} />}
      </div>
      <Meter track={track} />
    </li>
  )
}

function TrackList() {
  return (
    <section className="flex w-[281px] shrink-0 flex-col rounded-md border-2 border-[#454e56] bg-[#2f3940] pb-0.5">
      <div className="flex h-[29px] items-center justify-end pt-1 pr-4">
        <button type="button" aria-label="添加轨道" className="text-[#98a0a6]">
          <svg viewBox="0 0 9 9" className="w-[9px]" stroke="currentColor" strokeWidth="2"><path d="M4.500 0v9M0 4.500h9" /></svg>
        </button>
      </div>
      <ul className="mr-1 ml-[5px]">
        {TRACKS.map((track) => (
          <TrackRow key={track.name} track={track} />
        ))}
      </ul>
      <div className="mt-auto flex items-center gap-2 px-0.5 pr-1 text-[#8d969d]">
        <span className="mr-auto h-px w-1 bg-[#aab1b7]" />
        <svg viewBox="0 0 10 5" className="w-[10px]" fill="currentColor"><path d="M0 0h10L5 5z" /></svg>
        <MdSettings size={14} />
      </div>
    </section>
  )
}

/* ---------- arrangement ---------- */

function ClipBox({ clip, track }: { clip: Clip; track: Track }) {
  const w = (clip.to - clip.from) * BAR_PX
  const h = ROW_PX[track.size] - 5
  const flat = track.size === 'sm' || track.kind === 'fx'
  const open = clip.to === VIEW_END
  return (
    <div
      className={`absolute inset-y-0.5 overflow-hidden border border-[#d6e2ee] ${clip.from === VIEW_START ? 'border-l-0' : ''} ${open ? 'border-r-0' : ''} ${
        flat ? 'bg-[#8c9eb8]/95' : 'bg-linear-to-b from-[#a8b5c1]/95 to-[#83929e]/95'
      }`}
      style={{ left: pct(clip.from), width: `calc(${pct(clip.to)} - ${pct(clip.from)})` }}
    >
      {clip.label && <span className="absolute top-px left-1 font-['Roboto'] text-[11px] leading-[14px] text-[#333d47]">{clip.label}</span>}
      {clip.notes && (
        <svg viewBox={`0 0 ${w} ${h}`} preserveAspectRatio="none" className="absolute inset-0 h-full w-full" fill="#50606e">
          {clip.notes.map(([x, y, nw, nh], i) => (
            <rect key={i} x={x} y={y} width={nw} height={nh} opacity={nh > 9 || nw === 1 || nh === 1 ? 0.4 : y < 20 ? 0.65 : 0.9} />
          ))}
        </svg>
      )}
      {track.kind === 'audio' && (
        <svg viewBox="0 0 874 36" preserveAspectRatio="none" className="absolute inset-0 h-full w-full">
          <path d={WAVE_PATH} fill="url(#wave)" stroke="#2c373f" strokeWidth="1" />
        </svg>
      )}
    </div>
  )
}

function Ruler() {
  return (
    <div className="relative h-[25px] overflow-hidden border-b border-[#33475b] bg-[#86a4c0]">
      {BARS.map((bar) => (
        <span
          key={bar}
          className="absolute inset-y-0 border-l border-[#0d1218] pt-2 pl-[3px] font-['Noto_Sans'] text-xs leading-4 font-bold text-[#0f161d]"
          style={{ left: pct(bar) }}
        >
          {bar}
        </span>
      ))}
      <span className="absolute inset-y-0 right-0 w-1.5 bg-[#1d2226]" />
    </div>
  )
}

const VSLIDER_LINE = 'w-px bg-[#b9bfc4]'
const KNOB = 'size-[5px] shrink-0 rounded-full bg-[#c6cbd0]'
const RANGE =
  'appearance-none bg-transparent [&::-webkit-slider-thumb]:size-[6px] [&::-webkit-slider-thumb]:appearance-none [&::-webkit-slider-thumb]:rounded-full [&::-webkit-slider-thumb]:bg-[#c6cbd0]'

function SideStrip() {
  return (
    <div className="relative z-10 flex w-[14px] shrink-0 flex-col items-center pr-[3px] text-[#c6cbd0]">
      <button type="button" aria-label="标尺" className={`${SEG} mt-[5px] -ml-[5px] h-[15px] w-[13px] self-start border border-[#1a1f23] bg-[#777b7f]`}>
        <svg viewBox="0 0 8 5" className="w-2"><path d="M0 0h8L4 5z" fill="#17191b" /></svg>
      </button>
      <svg viewBox="0 0 7 7" className="mt-[9px] w-[7px]" stroke="currentColor"><path d="M0 7l7-7" /></svg>
      <div className={`mt-[10px] h-11 ${VSLIDER_LINE}`} />
      <div className={KNOB} />
      <div className={`mt-3 ${KNOB}`} />
      <div className={`flex-1 ${VSLIDER_LINE}`} />
      <div className={KNOB} />
      <svg viewBox="0 0 8 4" className="mt-3 w-2" fill="currentColor"><path d="M0 0h8L4 4z" /></svg>
      <span className="mt-2.5 h-px w-[5px] bg-current" />
      <div className={`mt-[5px] h-1.5 ${VSLIDER_LINE}`} />
      <div className={KNOB} />
      <div className={`h-[45px] ${VSLIDER_LINE}`} />
      <svg viewBox="0 0 5 5" className="mt-[3px] mb-1 w-[5px]" stroke="currentColor"><path d="M2.500 0v5M0 2.500h5" /></svg>
    </div>
  )
}

function Arrangement() {
  return (
    <section className="flex min-w-0 flex-1 flex-col rounded-md border-2 border-[#454e56] bg-[#2f3940] pt-1 pl-1">
      <div className="flex flex-1">
        <div className="relative flex min-w-0 flex-1 flex-col overflow-hidden">
          <Ruler />
          <div className="relative flex-1 bg-[#36475c]">
            {BARS.map((bar) => (
              <span key={bar} className="absolute inset-y-0 w-px bg-[#5d6d81]" style={{ left: pct(bar) }} />
            ))}
            <div className="relative">
              {TRACKS.map((track) => (
                <div key={track.name} className={`relative border-b border-[#3e4f65] ${ROW_CLASS[track.size]}`}>
                  {track.clips?.map((clip) => (
                    <ClipBox key={clip.from} clip={clip} track={track} />
                  ))}
                </div>
              ))}
            </div>
            {BARS.map((bar) => (
              <span key={bar} className="absolute inset-y-0 w-px bg-[#2c3c50]/15" style={{ left: pct(bar) }} />
            ))}
          </div>
          <span className="absolute inset-y-0 w-[4px] border-x border-white bg-[#1b2735]" style={{ left: pct(53.105) }} />
          <svg viewBox="0 0 12 19" className="absolute top-[93px] left-[15%] w-3" fill="#fff" stroke="#10151b">
            <path d="M.5.5v15l3.500-3.200 2.300 5.700 2.600-1.100L6.600 11.300h4.900z" />
          </svg>
        </div>
        <SideStrip />
      </div>
      <div className="flex h-[15px] items-center pr-5 pl-1.5 text-[#c6cbd0]">
        <span className={KNOB} />
        <div className="relative h-px flex-1 bg-[#aab1b7]">
          <span className="absolute -top-0.5 left-[19.500%] h-[5px] w-[43px] rounded-full bg-[#c3c5ca]" />
        </div>
        <span className={KNOB} />
        <svg viewBox="0 0 8 4" className="ml-3 w-2" fill="currentColor"><path d="M0 0h8L4 4z" /></svg>
        <span className="ml-2 h-px w-[5px] bg-current" />
        <input type="range" aria-label="水平缩放" defaultValue={40} className={`mx-[7px] w-[46px] ${RANGE} [&::-webkit-slider-runnable-track]:h-px [&::-webkit-slider-runnable-track]:bg-[#aab1b7] [&::-webkit-slider-thumb]:-mt-[2px]`} />
        <svg viewBox="0 0 5 5" className="w-[5px]" stroke="currentColor"><path d="M2.500 0v5M0 2.500h5" /></svg>
      </div>
    </section>
  )
}

export default function App() {
  return (
    <div className="flex min-h-screen flex-col bg-[#0f1113] font-['Noto_Sans_CJK_SC',sans-serif]">
      <svg className="absolute size-0" aria-hidden="true">
        <linearGradient id="level" x1="0" y1="0" x2="0" y2="1">
          <stop offset="0" stopColor="#3fe39c" />
          <stop offset="1" stopColor="#33b6e6" />
        </linearGradient>
        <linearGradient id="wave" x1="0" y1="0" x2="0" y2="1">
          <stop offset="0" stopColor="#7a8994" />
          <stop offset="1" stopColor="#596974" />
        </linearGradient>
      </svg>
      <Toolbar />
      <InfoLine />
      <p className="h-11 bg-[#141414] pl-0.5 text-xs leading-[40px] text-[#85888b]">无选择对象</p>
      <main className="flex flex-1 gap-1 bg-[#0f1113] px-px pb-px">
        <Inspector />
        <TrackList />
        <Arrangement />
      </main>
    </div>
  )
}
